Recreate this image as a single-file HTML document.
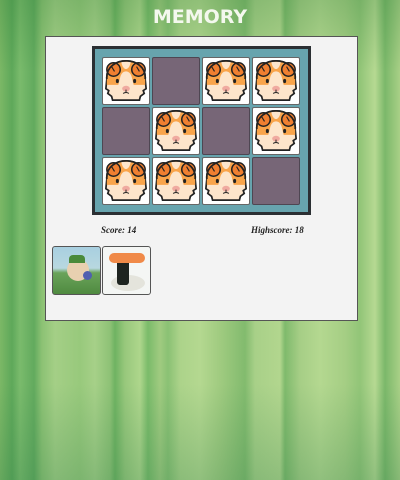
<!DOCTYPE html>
<html><head><style>
*{margin:0;padding:0;box-sizing:border-box}
body{width:400px;height:480px;overflow:hidden;position:relative;font-family:"Liberation Sans",sans-serif;
background:
linear-gradient(180deg,rgba(40,120,50,.25) 0%,rgba(0,0,0,0) 15%,rgba(0,0,0,0) 80%,rgba(40,120,70,.25) 100%),
linear-gradient(90deg,#7cb866 0,#5ea85a 12px,#7abb6c 20px,#62aa5e 34px,#8cc274 42px,#a4cf86 55px,#98c97c 80px,#a6d088 95px,#8ec276 110px,#6fb362 115px,#98c87c 125px,#aed68c 140px,#7abb6a 148px,#a0cb80 160px,#8ac174 168px,#acd38a 180px,#b4d890 200px,#a0cb80 220px,#82bb6e 245px,#a8d088 255px,#b2d68e 280px,#7fba6c 285px,#a6ce86 300px,#b4d890 320px,#a5ce84 345px,#92c578 360px,#b6d992 375px,#7bb86a 385px,#a9d087 400px);}
h1{position:absolute;top:6px;left:0;width:400px;text-align:center;color:#f4f8ee;font-size:19px;font-weight:bold;letter-spacing:0px;font-family:"DejaVu Sans",sans-serif}
.panel{position:absolute;left:45px;top:36px;width:313px;height:285px;background:#f3f3f3;border:1px solid #555}
.board{position:absolute;left:92px;top:46px;width:219px;height:169px;background:#67a4ae;border:3px solid #2b2f33}
.card{position:absolute;width:48px;height:48px;border-radius:2px}
.back{background:#776677;border:1px solid #4e4652}
.face{background:#fff;border:1px solid #666}
.txt{position:absolute;top:225px;font-family:"Liberation Serif",serif;font-style:italic;font-weight:bold;font-size:9px;color:#222}
.thumb{position:absolute;top:246px;width:49px;height:49px;border:1px solid #555;border-radius:3px;overflow:hidden}
</style></head><body>
<svg width="0" height="0" style="position:absolute"><defs>
<symbol id="g" viewBox="0 0 48 48">
<path d="M4 22 C3 9 14 3 24 3 C34 3 45 9 44 22 L45 32 L42 34 L43 37 L39 40 L38 44 L10 44 L9 40 L5 37 L6 34 L3 32 Z" fill="#fde5cb" stroke="#222" stroke-width="1.8"/>
<path d="M4 22 C3 9 14 3 24 3 C34 3 45 9 44 22 L44 28 L32 28 L30 20 C28 12 20 12 18 20 L16 28 L4 28 Z" fill="#f9a44a"/>
<path d="M19 4 C21 14 27 14 29 4 Z" fill="#fde5cb"/>
<circle cx="11" cy="12" r="7" fill="#f07f30" stroke="#222" stroke-width="1.6"/>
<circle cx="37" cy="12" r="7" fill="#f07f30" stroke="#222" stroke-width="1.6"/>
<path d="M9 9 L12 14 M35 9 L38 14" stroke="#222" stroke-width="1.2"/>
<path d="M4 22 C3 9 14 3 24 3 C34 3 45 9 44 22" fill="none" stroke="#222" stroke-width="1.8"/>
<ellipse cx="15" cy="24" rx="1.6" ry="2.2" fill="#222"/><ellipse cx="33" cy="24" rx="1.6" ry="2.2" fill="#222"/>
<ellipse cx="24" cy="32" rx="4" ry="3" fill="#f0aaa0"/>
<path d="M24 33 V36 M21 37 Q24 35 27 37" stroke="#222" stroke-width="1" fill="none"/>
</symbol></defs></svg>
<h1>MEMORY</h1>
<div class="panel"></div>
<div class="board"></div>
<div class="card face" style="left:102px;top:57px"><svg width="46" height="46"><use href="#g"/></svg></div>
<div class="card back" style="left:152px;top:57px"></div>
<div class="card face" style="left:202px;top:57px"><svg width="46" height="46"><use href="#g"/></svg></div>
<div class="card face" style="left:252px;top:57px"><svg width="46" height="46"><use href="#g"/></svg></div>
<div class="card back" style="left:102px;top:107px"></div>
<div class="card face" style="left:152px;top:107px"><svg width="46" height="46"><use href="#g"/></svg></div>
<div class="card back" style="left:202px;top:107px"></div>
<div class="card face" style="left:252px;top:107px"><svg width="46" height="46"><use href="#g"/></svg></div>
<div class="card face" style="left:102px;top:157px"><svg width="46" height="46"><use href="#g"/></svg></div>
<div class="card face" style="left:152px;top:157px"><svg width="46" height="46"><use href="#g"/></svg></div>
<div class="card face" style="left:202px;top:157px"><svg width="46" height="46"><use href="#g"/></svg></div>
<div class="card back" style="left:252px;top:157px"></div>
<div class="txt" style="left:101px">Score: 14</div>
<div class="txt" style="left:251px">Highscore: 18</div>
<div class="thumb" style="left:52px;background:linear-gradient(180deg,#a8cfe0 0%,#b8d8e0 45%,#6aa35a 55%,#4f8a40 100%)">
<div style="position:absolute;left:14px;top:12px;width:22px;height:22px;border-radius:50%;background:#e8d0b0"></div>
<div style="position:absolute;left:16px;top:8px;width:16px;height:8px;background:#4a8a3a;border-radius:4px 4px 0 0"></div>
<div style="position:absolute;left:30px;top:24px;width:9px;height:9px;border-radius:50%;background:#5060b0"></div></div>
<div class="thumb" style="left:102px;background:#f4f6f4">
<div style="position:absolute;left:8px;top:28px;width:34px;height:16px;border-radius:50%;background:#e4e4dc"></div>
<div style="position:absolute;left:14px;top:8px;width:12px;height:30px;background:#1e2420;border-radius:3px"></div>
<div style="position:absolute;left:6px;top:6px;width:36px;height:10px;border-radius:5px;background:#f08a48"></div></div>
</body></html>
